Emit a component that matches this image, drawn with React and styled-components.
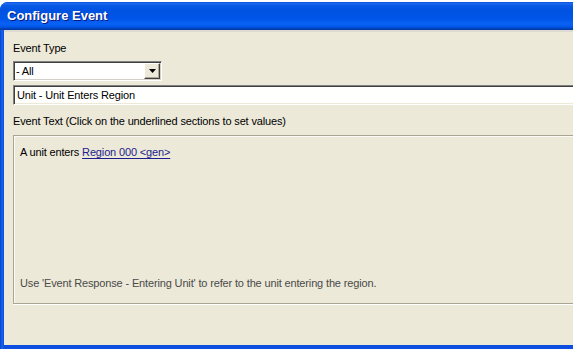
import React from 'react';
import styled, { createGlobalStyle } from 'styled-components';

const GlobalStyle = createGlobalStyle`
  html, body {
    margin: 0;
    padding: 0;
    background: #ffffff;
    overflow: hidden;
  }
  body {
    font-family: "Liberation Sans", Arial, sans-serif;
    font-size: 11px;
    letter-spacing: -0.15px;
  }
`;

const Window = styled.div`
  margin-top: 2px;
  width: 640px;
  height: 347px;
  display: flex;
  flex-direction: column;
  border-radius: 8px 8px 0 0;
  overflow: hidden;
  background: linear-gradient(to right, #0a3fc8 0px, #1666ee 2px, #0b4ee0 4px);
`;

const TitleBar = styled.div`
  height: 28px;
  flex: none;
  display: flex;
  align-items: center;
  padding-left: 7px;
  padding-bottom: 1px;
  box-sizing: border-box;
  color: #ffffff;
  font-family: "Liberation Sans", Arial, sans-serif;
  font-weight: bold;
  font-size: 13px;
  letter-spacing: 0;
  text-shadow: 1px 1px 0 #0a1883;
  background: linear-gradient(
    to bottom,
    #0a4fd8 0%,
    #1e6af0 6%,
    #0a58e6 12%,
    #0052e0 30%,
    #0055e8 60%,
    #0a62f4 78%,
    #0058ea 88%,
    #0046c0 94%,
    #00379e 100%
  );
`;

const Body = styled.div`
  flex: 1;
  margin: 0 0 4px 4px;
  background: #ece9d8;
  border-top: 2px solid #dcdad2;
  padding: 10px 0 0 9px;
  display: flex;
  flex-direction: column;
`;

const Label = styled.div`
  line-height: 13px;
  color: #000000;
  margin-top: ${(p) => p.$top || 0}px;
`;

const Select = styled.div`
  margin-top: 6px;
  width: 149px;
  height: 20px;
  box-sizing: border-box;
  display: flex;
  align-items: stretch;
  background: #ffffff;
  border-top: 1px solid #808080;
  border-left: 1px solid #808080;
  border-right: 1px solid #ffffff;
  border-bottom: 1px solid #ffffff;
  box-shadow: inset 1px 1px 0 #404040, inset -1px -1px 0 #d4d0c8;
`;

const SelectValue = styled.div`
  flex: 1;
  padding-left: 2px;
  display: flex;
  align-items: center;
`;

const ArrowButton = styled.div`
  width: 16px;
  margin: 1px 1px 1px 0;
  background: #ece9d8;
  box-sizing: border-box;
  border-top: 1px solid #ffffff;
  border-left: 1px solid #ffffff;
  border-right: 1px solid #404040;
  border-bottom: 1px solid #404040;
  box-shadow: inset -1px -1px 0 #aca899;
  display: flex;
  align-items: center;
  justify-content: center;
`;

const TextField = styled.div`
  margin-top: 4px;
  height: 20px;
  box-sizing: border-box;
  padding-left: 3px;
  display: flex;
  align-items: center;
  background: #fffffd;
  border-top: 1px solid #808080;
  border-left: 1px solid #808080;
  border-bottom: 1px solid #ffffff;
  box-shadow: inset 1px 1px 0 #404040, inset 0 -1px 0 #ece9d8;
`;

const EventBox = styled.div`
  margin-top: 7px;
  height: 169px;
  box-sizing: border-box;
  border: 1px solid #a7a595;
  box-shadow: 0 1px 0 #ffffff, inset 1px 1px 0 #fbfaf6;
  padding: 10px 6px 13px 6px;
  display: flex;
  flex-direction: column;
  justify-content: space-between;
`;

const Line = styled.div`
  line-height: 13px;
  color: ${(p) => p.$color || '#000000'};
`;

const Link = styled.span`
  color: #1c1c8c;
  text-decoration: underline;
  text-underline-offset: 2px;
`;

export default function App() {
  return (
    <>
      <GlobalStyle />
      <Window>
        <TitleBar>Configure Event</TitleBar>
        <Body>
          <Label>Event Type</Label>
          <Select>
            <SelectValue>- All</SelectValue>
            <ArrowButton>
              <svg width="7" height="4" viewBox="0 0 7 4">
                <path d="M0 0 L7 0 L3.5 4 Z" fill="#000000" />
              </svg>
            </ArrowButton>
          </Select>
          <TextField>Unit - Unit Enters Region</TextField>
          <Label $top={10}>Event Text (Click on the underlined sections to set values)</Label>
          <EventBox>
            <Line>
              A unit enters <Link>Region 000 &lt;gen&gt;</Link>
            </Line>
            <Line $color="#4a4a4a">
              Use 'Event Response - Entering Unit' to refer to the unit entering the region.
            </Line>
          </EventBox>
        </Body>
      </Window>
    </>
  );
}
